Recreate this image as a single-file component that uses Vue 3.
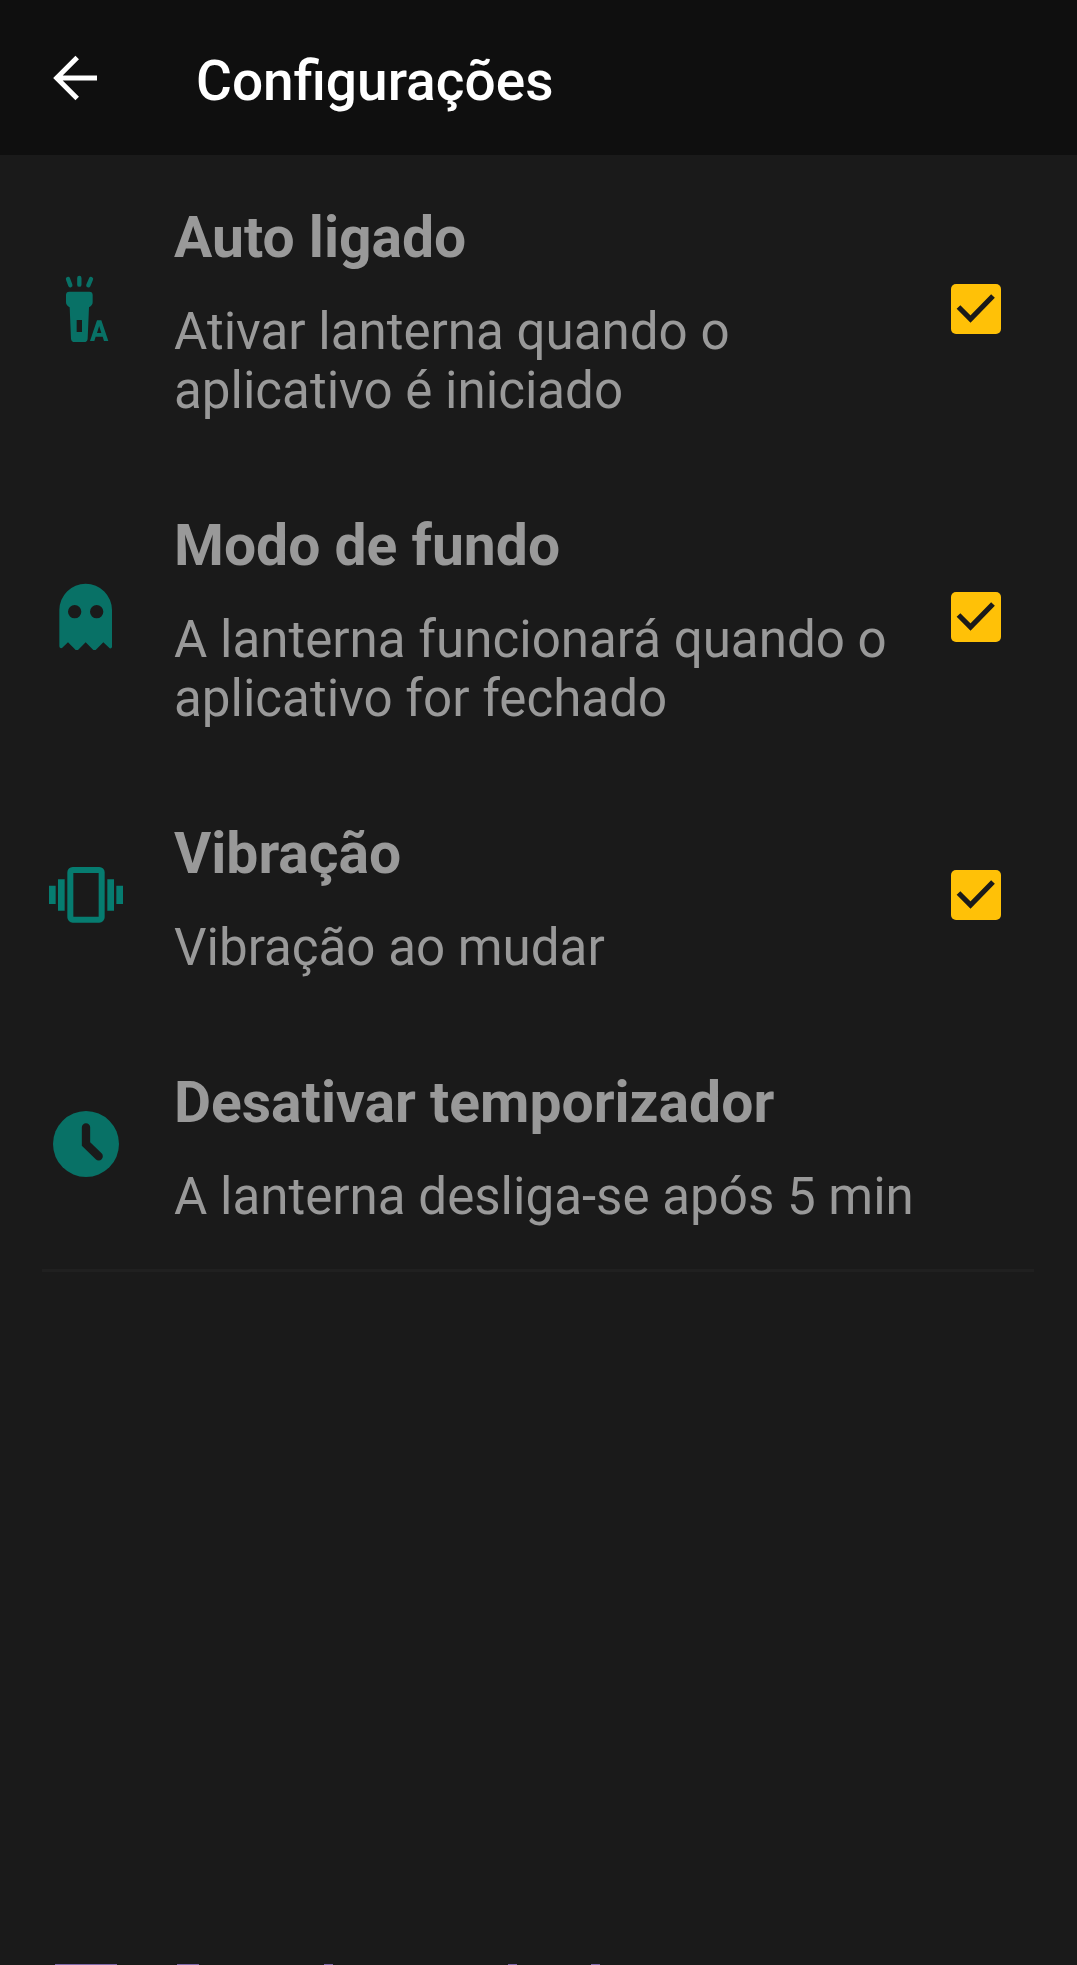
<script setup>
const rows = [
  { icon: 'torch', title: 'Auto ligado', lines: ['Ativar lanterna quando o', 'aplicativo é iniciado'], checked: true },
  { icon: 'ghost', title: 'Modo de fundo', lines: ['A lanterna funcionará quando o', 'aplicativo for fechado'], checked: true },
  { icon: 'vibrate', title: 'Vibração', lines: ['Vibração ao mudar'], checked: true },
  { icon: 'clock', title: 'Desativar temporizador', lines: ['A lanterna desliga-se após 5 min'], checked: false },
]
</script>

<template>
  <div class="screen">
    <header class="bar">
      <svg class="back" width="50" height="50" viewBox="0 0 50 50">
        <path d="M47 25H9M27.200 4.500L6.700 25L27.200 45.500" fill="none" stroke="#fff" stroke-width="5" />
      </svg>
      <h1>Configurações</h1>
    </header>
    <main>
      <section v-for="row in rows" :key="row.title" class="row" :class="row.icon">
        <svg v-if="row.icon === 'torch'" class="icon" viewBox="0 -3 270 300">
          <g fill="none" stroke="#087166" stroke-width="13" stroke-linecap="round">
            <path d="M118 54V74M84 57L91 76M153 57L145 76" />
          </g>
          <path fill="#087166" fill-rule="evenodd" d="M88 95H148Q158 95 158 105V127Q158 136 147 142L143 236Q142 246 132 246H104Q94 246 93 236L89 142Q78 136 78 127V105Q78 95 88 95ZM110 180V216H126V180Z" />
          <path fill="#087166" fill-rule="evenodd" d="M150 243L171 181H184L205 243H192L188 230H167L163 243ZM171 219H184L177.500 198Z" />
        </svg>
        <svg v-else-if="row.icon === 'ghost'" class="icon" viewBox="0 -9 270 300">
          <path fill="#087166" fill-rule="evenodd" d="M58 120A79 79 0 0 1 216 120V230Q216 236 209 235L190 217L167 240H160L137 217L114 240H107L84 217L66 234Q58 236 58 229ZM84 125a20 20 0 1 0 40 0a20 20 0 1 0 -40 0M150 125a20 20 0 1 0 40 0a20 20 0 1 0 -40 0" />
        </svg>
        <svg v-else-if="row.icon === 'vibrate'" class="icon" viewBox="0 -15 270 300">
          <rect x="91" y="60" width="94" height="149" rx="7" fill="none" stroke="#067c70" stroke-width="18" />
          <path fill="#067c70" d="M27 107h20v55h-20zM54 88h20v94h-20zM202 88h20v94h-20zM229 107h20v55h-20z" />
        </svg>
        <svg v-else class="icon" viewBox="0 0 270 300">
          <circle cx="138" cy="147" r="99" fill="#087166" />
          <path d="M138 97V147L176 184" fill="none" stroke="#1a1a1a" stroke-width="25" stroke-linecap="round" stroke-linejoin="miter" />
        </svg>
        <div class="copy">
          <h2>{{ row.title }}</h2>
          <p v-for="line in row.lines" :key="line">{{ line }}</p>
        </div>
        <svg v-if="row.checked" class="check" viewBox="0 0 50 50">
          <rect width="50" height="50" rx="5" fill="#ffc107" />
          <path d="M7.500 23L19.500 35L42 12" fill="none" stroke="#1a1a1a" stroke-width="5.200" />
        </svg>
      </section>
      <hr />
    </main>
    <footer class="next"><i class="a" /><i class="b" /><i class="c" /><i class="d" /><i class="e" /></footer>
  </div>
</template>

<style>
body { margin: 0; background: #1a1a1a; }
</style>

<style scoped>
.screen {
  width: 1077px;
  height: 1965px;
  overflow: hidden;
  display: flex;
  flex-direction: column;
  background: #1a1a1a;
  font-family: Roboto, "Liberation Sans", sans-serif;
}
.bar {
  height: 155px;
  flex: none;
  background: #0f0f0f;
  display: flex;
  align-items: center;
}
.back { margin: 0 0 0 50px; }
h1 {
  margin: 7px 0 0 96px;
  font-size: 55px;
  line-height: 64px;
  font-weight: 500;
  color: #fff;
}
main { flex: 1; }
.row {
  display: flex;
  align-items: center;
  padding-right: 76px;
}
.icon { width: 90px; height: 100px; margin-left: 40px; flex: none; }
.copy { flex: 1; margin-left: 44px; padding: 49px 0 43px; color: #999; white-space: nowrap; }
h2 { margin: 0 0 31px; font-size: 57px; line-height: 67px; font-weight: 700; }
p { margin: 0; font-size: 51.12px; line-height: 59px; }
.check { width: 50px; height: 50px; flex: none; }
.vibrate .icon,
.vibrate .check { margin-bottom: 1px; }
hr { height: 3px; border: 0; margin: 0 43px 0 42px; background: #202020; }
.next { display: flex; height: 1px; flex: none; padding-left: 55px; }
.next i { background: #7f68a8; height: 1px; }
.a { width: 62px; }
.b { width: 22px; margin-left: 60px; }
.c { width: 9px; margin-left: 125px; }
.d { width: 9px; margin-left: 175px; }
.e { width: 9px; margin-left: 74px; }
</style>
